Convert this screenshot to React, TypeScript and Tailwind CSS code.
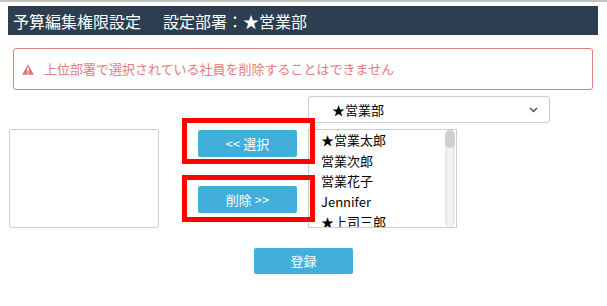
import React from "react";

const font = { fontFamily: '"Noto Sans CJK JP", "Noto Sans", sans-serif' };

export default function App() {
  const items = ["★営業太郎", "営業次郎", "営業花子", "Jennifer", "★上司三郎"];
  return (
    <div className="relative w-[607px] h-[306px] bg-white overflow-hidden" style={font}>
      <div className="h-[2px] bg-[#c4c4c4]" />
      <div className="mt-[4px] ml-[8px] w-[590px] h-[29px] bg-[#2c3e50] text-white text-[16px] leading-none flex items-center pl-[5px]">
        <span>予算編集権限設定</span>
        <span className="ml-[22px]">設定部署：★営業部</span>
      </div>
      <div className="mt-[13px] ml-[13px] w-[580px] h-[42px] border border-[#e77c7c] rounded-[3px] flex items-center pl-[8px] text-[13px] text-[#e77c7c]">
        <svg width="12" height="11" viewBox="0 0 12 11" className="shrink-0">
          <path d="M6 0.3 L11.8 10.7 L0.2 10.7 Z" fill="#e07474" strokeLinejoin="round" />
          <rect x="5.3" y="3.5" width="1.4" height="4" fill="#fff" />
          <rect x="5.3" y="8.4" width="1.4" height="1.3" fill="#fff" />
        </svg>
        <span className="ml-[10px]">上位部署で選択されている社員を削除することはできません</span>
      </div>
      <div className="flex mt-[6px]">
        <div className="ml-[9px] mt-[33px] w-[150px] h-[99px] border border-[#cccccc] rounded-[2px]" />
        <div className="ml-[39px] mt-[34px] w-[99px] flex flex-col gap-[29px]">
          <button className="h-[27px] bg-[#41aedc] text-white text-[13px] rounded-[2px] flex items-center justify-center">
            &lt;&lt; 選択
          </button>
          <button className="h-[27px] bg-[#41aedc] text-white text-[13px] rounded-[2px] flex items-center justify-center">
            削除 &gt;&gt;
          </button>
        </div>
        <div className="ml-[11px] flex flex-col gap-[6px]">
          <div className="w-[242px] h-[27px] border border-[#cccccc] rounded-[3px] flex items-center pl-[23px] pr-[11px] text-[13px] text-black">
            <span className="flex-1">★営業部</span>
            <svg width="9" height="6" viewBox="0 0 9 6">
              <path d="M1 1 L4.5 4.5 L8 1" fill="none" stroke="#444" strokeWidth="1.3" />
            </svg>
          </div>
          <div className="w-[149px] h-[99px] border border-[#cccccc] flex overflow-hidden">
            <div className="flex-1 pl-[12px] text-[13px] text-black leading-[20.5px] overflow-hidden">
              {items.map((t) => (
                <div key={t} className="whitespace-nowrap">{t}</div>
              ))}
            </div>
            <div className="w-[10px] mr-[1px] bg-gradient-to-r from-[#e6e6e6] via-[#f7f7f7] to-[#e6e6e6] rounded-[5px] flex flex-col">
              <div className="h-[18px] bg-[#cfcfcf] rounded-[5px]" />
            </div>
          </div>
        </div>
      </div>
      <div className="mt-[20px] ml-[254px] w-[99px] h-[26px] bg-[#41aedc] text-white text-[13px] rounded-[2px] flex items-center justify-center">
        登録
      </div>
      <div className="absolute left-[182px] top-[118px] w-[133px] h-[46px] border-[5px] border-[#ff0000]" />
      <div className="absolute left-[182px] top-[175px] w-[133px] h-[47px] border-[5px] border-[#ff0000]" />
    </div>
  );
}
